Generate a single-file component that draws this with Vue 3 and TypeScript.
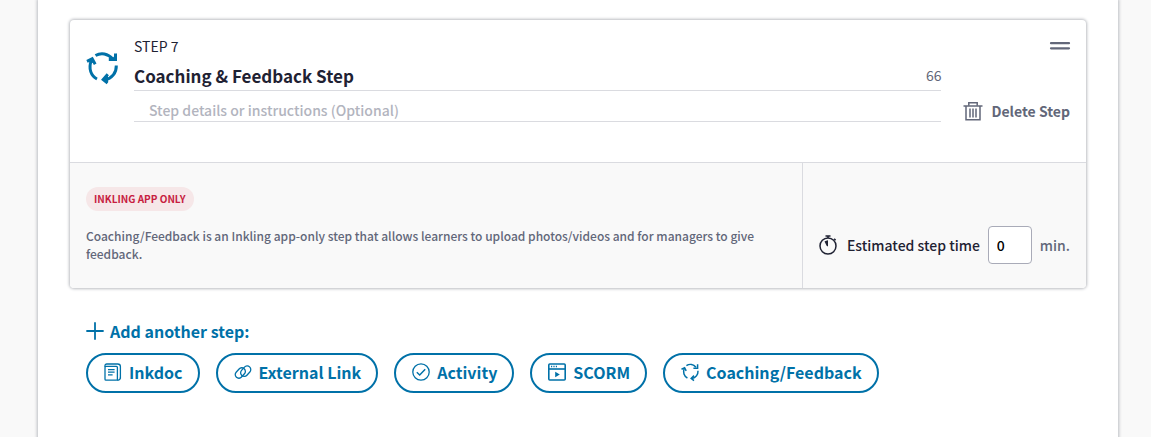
<script setup lang="ts">
import { ref } from 'vue'

type IconName = 'doc' | 'link' | 'check' | 'scorm' | 'cycle'

interface StepType {
  label: string
  icon: IconName
}

const title = ref('Coaching & Feedback Step')
const details = ref('')
const minutes = ref('0')
const remaining = ref(66)

const stepTypes: StepType[] = [
  { label: 'Inkdoc', icon: 'doc' },
  { label: 'External Link', icon: 'link' },
  { label: 'Activity', icon: 'check' },
  { label: 'SCORM', icon: 'scorm' },
  { label: 'Coaching/Feedback', icon: 'cycle' },
]
</script>

<template>
  <main class="sheet">
    <section class="card">
      <div class="head">
        <svg class="cycle" viewBox="0 0 32 34" aria-hidden="true">
          <g fill="none" stroke="currentColor" stroke-width="3">
            <path d="M9.5 4.5C15 1.3 22 2.3 26.7 8" />
            <path d="M30.3 14.5C30.6 21.5 26 27.5 18.5 29" />
            <path d="M11 28C5 25 2.2 17.5 5.3 9.5" />
            <path d="M29.5 2.5V8.6H22.8" />
            <path d="M21.8 23.2L17.2 28.6L21.6 32" />
            <path d="M1 10.4L6.2 7.8L9.2 13.2" />
          </g>
          <path d="M24.5 9.5L30.5 2.5V10Z M16 28.6L22 24V31.5Z M1.5 10.2L6.5 6.6L8.6 12.5Z" fill="currentColor" />
        </svg>
        <div class="fields">
          <p class="number">STEP 7</p>
          <div class="title-row">
            <input v-model="title" class="title" type="text" aria-label="Step title" />
            <span class="count">{{ remaining }}</span>
          </div>
          <input
            v-model="details"
            class="details"
            type="text"
            aria-label="Step details"
            placeholder="Step details or instructions (Optional)"
          />
        </div>
        <div class="actions">
          <button class="drag" type="button" aria-label="Reorder step">
            <svg viewBox="0 0 20 8" aria-hidden="true">
              <path d="M1 1.2H19M1 6.3H19" fill="none" stroke="currentColor" stroke-width="2.2" stroke-linecap="round" />
            </svg>
          </button>
          <button class="delete" type="button">
            <svg viewBox="0 0 20 20" aria-hidden="true">
              <g fill="none" stroke="currentColor" stroke-width="1.5">
                <path d="M.5 5H19.5" />
                <path d="M5.8 4.7V1.8H14.2V4.7" />
                <path d="M3 5V18.7H17V5" />
                <path d="M7 7.5V16.5M10 7.5V16.5M13 7.5V16.5" />
              </g>
            </svg>
            Delete Step
          </button>
        </div>
      </div>
      <div class="foot">
        <div class="info">
          <span class="badge">INKLING APP ONLY</span>
          <p class="note">
            Coaching/Feedback is an Inkling app-only step that allows learners to upload photos/videos and for managers
            to give feedback.
          </p>
        </div>
        <div class="time">
          <svg viewBox="0 0 18 20" aria-hidden="true">
            <g fill="none" stroke="currentColor" stroke-width="1.5">
              <circle cx="9" cy="11" r="8" />
              <path d="M6.5 .9H11.5M9 1V3M15.2 3.8L16.6 5.2" />
            </g>
            <path d="M9 11.5L7.6 10.7L5.5 6.4Q7 5.5 9 5.3Z" fill="currentColor" />
          </svg>
          <label for="minutes">Estimated step time</label>
          <input id="minutes" v-model="minutes" type="text" inputmode="numeric" />
          <span class="unit">min.</span>
        </div>
      </div>
    </section>

    <section class="add">
      <h2>
        <svg viewBox="0 0 18 18" aria-hidden="true">
          <path d="M9 1V17M1 9H17" fill="none" stroke="currentColor" stroke-width="1.8" stroke-linecap="round" />
        </svg>
        Add another step:
      </h2>
      <div class="types">
        <button v-for="step in stepTypes" :key="step.label" type="button">
          <svg viewBox="0 0 18 18" aria-hidden="true">
            <g fill="none" stroke="currentColor" stroke-width="1.3">
              <template v-if="step.icon === 'doc'">
                <rect x="1" y="3.4" width="12.4" height="13.8" rx="1" />
                <path d="M1 4V2.6Q1 1 2.8 1H13.6Q16.4 1 16.4 3.6V15.6" />
                <path d="M13 17.2Q16.4 17.2 16.4 14.5" />
                <path d="M4 6.6H10.6M4 9.2H10.6M4 11.8H8.6" />
              </template>
              <template v-else-if="step.icon === 'link'">
                <rect x="-5.8" y="-3.6" width="11.6" height="7.2" rx="3.6" transform="translate(6.3 10) rotate(-48)" />
                <rect x="-5.8" y="-3.6" width="11.6" height="7.2" rx="3.6" transform="translate(11.7 8.2) rotate(-48)" />
              </template>
              <template v-else-if="step.icon === 'check'">
                <circle cx="9" cy="9" r="8.2" />
                <path d="M4.8 9.3L7.7 12L13.2 6.3" stroke-width="1.5" />
              </template>
              <template v-else-if="step.icon === 'scorm'">
                <rect x=".8" y="1" width="16.4" height="16" rx="1" stroke-width="1.6" />
                <path d="M1 6H17" stroke-width="1.6" />
                <path d="M3 3.5H4.2M5.4 3.5H6.6M7.8 3.5H9" />
                <path d="M7.2 8.7V14.3L11.8 11.5Z" fill="currentColor" stroke="none" />
              </template>
              <template v-else>
                <path d="M5.4 2.6C8.5 .7 12.5 1.2 15 4.2" stroke-width="1.5" />
                <path d="M17 7.8C17.2 11.5 14.7 14.6 11 15.4" stroke-width="1.5" />
                <path d="M6.4 15C3 13.2 1.7 9.2 3.2 5.5" stroke-width="1.5" />
                <path d="M16.6 1.2V5.2H12.4M13 12.6L10.2 15.4L13 17.6M.5 6.2L3.6 4.7L5.2 7.9" stroke-width="1.5" />
              </template>
            </g>
          </svg>
          {{ step.label }}
        </button>
      </div>
    </section>
  </main>
</template>

<style>
html,
body,
#app {
  height: 100%;
}

body {
  background: #f9f9f9;
}
</style>

<style scoped>
* {
  box-sizing: border-box;
}

.sheet {
  min-height: 100%;
  margin: 0 33px 0 38px;
  padding: 20px 32px;
  background: #fff;
  box-shadow: 0 0 3px 1px #bbbdc2;
  color: #1f2233;
  font-family: 'Source Sans Pro', 'Noto Sans CJK SC', 'Noto Sans', sans-serif;
  font-size: 14px;
  line-height: 20px;
}

button,
input {
  margin: 0;
  padding: 0;
  border: 0;
  background: none;
  color: inherit;
  font: inherit;
}

p,
h2 {
  margin: 0;
}

svg {
  display: block;
  flex: none;
  overflow: visible;
}

.card {
  border-radius: 4px;
  background: #fff;
  box-shadow: 0 0 3px 1px #bbbdc2;
}

.head {
  display: grid;
  grid-template-columns: 32px minmax(0, 1fr) auto;
  padding: 16px 16px 40px;
}

.cycle {
  width: 32px;
  height: 34px;
  margin-top: 15px;
  color: #0071a8;
}

.fields {
  margin: 0 22px 0 16px;
}

.title-row {
  display: flex;
  align-items: center;
  height: 35px;
  padding-top: 4px;
  border-bottom: 1px solid #dadbe0;
}

.title {
  flex: 1;
  min-width: 0;
  height: 30px;
  font-size: 17px;
  font-weight: 700;
}

.count {
  color: #626779;
}

.details {
  display: block;
  width: 100%;
  height: 31px;
  padding: 8px 15px 0;
  border-bottom: 1px solid #dadbe0;
  font-weight: 500;
}

.details::placeholder {
  color: #b2b4be;
  opacity: 1;
}

.actions {
  display: flex;
  flex-direction: column;
  align-items: flex-end;
  justify-content: space-between;
  color: #626779;
}

.drag {
  margin-top: 6px;
}

.drag svg {
  width: 20px;
  height: 8px;
}

.delete {
  display: flex;
  align-items: center;
  gap: 8px;
  padding-bottom: 1px;
  font-weight: 700;
}

.delete svg {
  width: 20px;
  height: 20px;
}

.foot {
  display: flex;
  border-top: 1px solid #dadbe0;
  border-radius: 0 0 4px 4px;
  background: #f9f9f9;
}

.info {
  flex: 1;
  min-width: 0;
  padding: 24px 16px;
}

.badge {
  display: inline-block;
  padding: 0 8px;
  border-radius: 12px;
  background: #f6e7e8;
  color: #c7203f;
  font-size: 10px;
  font-weight: 700;
  line-height: 24px;
  vertical-align: top;
}

.note {
  margin-top: 16px;
  padding-bottom: 1px;
  color: #626779;
  font-size: 12px;
  font-weight: 500;
  line-height: 18px;
}

.time {
  display: flex;
  align-items: center;
  gap: 8px;
  padding: 38px 16px 0;
  border-left: 1px solid #dadbe0;
  font-weight: 500;
}

.time svg {
  width: 18px;
  height: 20px;
  margin-right: 2px;
}

.time input {
  width: 44px;
  height: 38px;
  padding: 0 8px;
  border: 1px solid #a9abb8;
  border-radius: 4px;
  background: #fff;
  color: #000;
}

.unit {
  color: #626779;
}

.add {
  padding: 31px 16px;
  color: #0071a8;
}

.add h2 {
  display: flex;
  align-items: center;
  gap: 6px;
  font-size: 16px;
  font-weight: 700;
  line-height: 24px;
}

.add h2 svg {
  width: 18px;
  height: 18px;
}

.types {
  display: flex;
  flex-wrap: wrap;
  gap: 16px;
  margin-top: 10px;
}

.types button {
  display: flex;
  align-items: center;
  gap: 7px;
  height: 40px;
  padding: 0 15px 2px 16px;
  border: 2px solid #0071a8;
  border-radius: 20px;
  font-size: 16px;
  font-weight: 700;
}

.types svg {
  width: 18px;
  height: 18px;
}
</style>
